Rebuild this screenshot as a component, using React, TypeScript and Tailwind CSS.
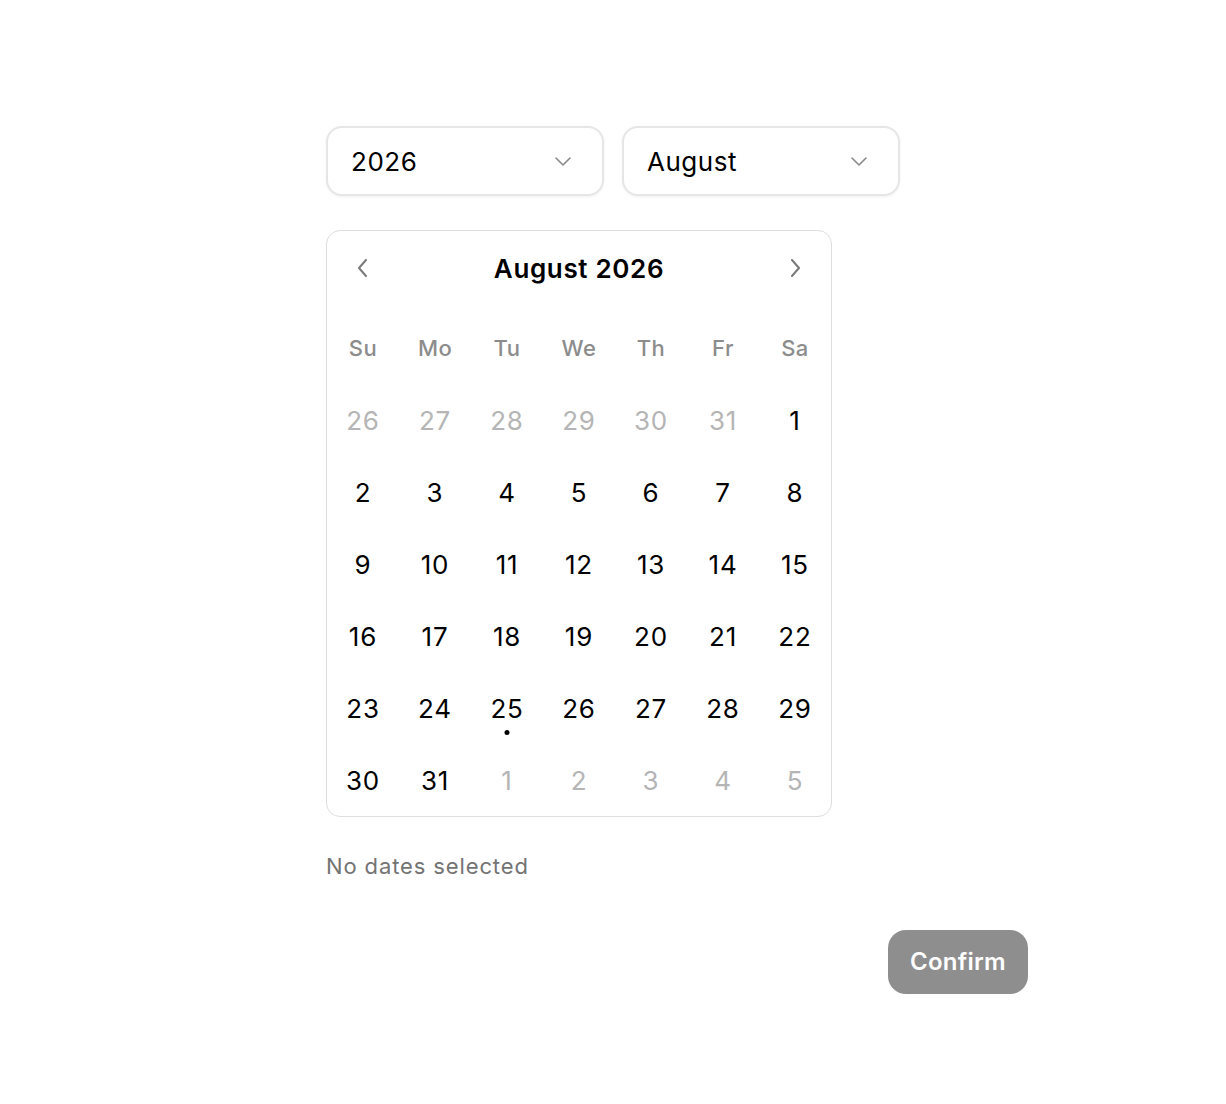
import React from 'react'

const weekdays = ['Su', 'Mo', 'Tu', 'We', 'Th', 'Fr', 'Sa']

type Day = { n: number; muted?: boolean; today?: boolean }

const days: Day[] = [
  ...[26, 27, 28, 29, 30, 31].map((n) => ({ n, muted: true })),
  ...Array.from({ length: 31 }, (_, i) => ({ n: i + 1, today: i + 1 === 25 })),
  ...[1, 2, 3, 4, 5].map((n) => ({ n, muted: true })),
]

function Chevron({ dir, className }: { dir: 'left' | 'right' | 'down'; className?: string }) {
  const d =
    dir === 'down' ? 'M2 2 L9 9 L16 2' : dir === 'left' ? 'M8 1 L1 9 L8 17' : 'M1 1 L8 9 L1 17'
  const vb = dir === 'down' ? '0 0 18 11' : '0 0 9 18'
  return (
    <svg viewBox={vb} className={className} fill="none" stroke="currentColor" strokeLinecap="round" strokeLinejoin="round">
      <path d={d} />
    </svg>
  )
}

function Select({ value }: { value: string }) {
  return (
    <div className="w-[278px] h-[70px] rounded-[16px] border-2 border-[#e6e6e6] bg-white shadow-[0_1px_3px_rgba(0,0,0,0.06)] flex items-center justify-between pl-[23px] pr-[30px]">
      <span className="text-[26px] text-black leading-none tracking-[0.02em] translate-y-[1px]">{value}</span>
      <Chevron dir="down" className="w-[18px] h-[11px] text-[#8a8a8a] [stroke-width:1.6]" />
    </div>
  )
}

export default function App() {
  return (
    <div className="min-h-screen bg-white" style={{ fontFamily: 'Inter, "Noto Sans", sans-serif' }}>
      <div className="pl-[326px] pt-[126px]">
        <div className="w-[702px]">
          {/* Year / month pickers */}
          <div className="flex gap-[18px]">
            <Select value="2026" />
            <Select value="August" />
          </div>

          {/* Calendar */}
          <div className="mt-[34px] w-[506px] rounded-[14px] border border-[#dedede] bg-white">
            <div className="h-[74px] flex items-center justify-between px-[31px]">
              <Chevron dir="left" className="w-[9px] h-[18px] text-[#7a7a7a] [stroke-width:2]" />
              <span className="text-[26px] font-semibold text-black tracking-[0.025em]">August 2026</span>
              <Chevron dir="right" className="w-[9px] h-[18px] text-[#7a7a7a] [stroke-width:2]" />
            </div>
            <div className="mt-[7px] grid grid-cols-7">
              {weekdays.map((w) => (
                <div key={w} className="h-[72px] flex items-center justify-center text-[22px] font-medium text-[#8c8c8c] tracking-[0.02em]">
                  {w}
                </div>
              ))}
              {days.map((d, i) => (
                <div key={i} className="relative h-[72px] flex items-center justify-center">
                  <span className={d.muted ? 'text-[26px] text-[#b5b5b5] tracking-[0.03em]' : 'text-[26px] text-black tracking-[0.03em]'}>{d.n}</span>
                  {d.today && <span className="absolute left-1/2 top-[58px] -translate-x-1/2 w-[5px] h-[5px] rounded-full bg-black" />}
                </div>
              ))}
            </div>
          </div>

          <p className="mt-[35px] text-[22px] text-[#737373] leading-[28px] tracking-[0.04em]">No dates selected</p>

          <div className="mt-[50px] flex justify-end">
            <button className="w-[140px] h-[64px] rounded-[18px] bg-[#8e8e8e] text-white text-[24px] font-semibold tracking-[0.01em]">
              Confirm
            </button>
          </div>
        </div>
      </div>
    </div>
  )
}
